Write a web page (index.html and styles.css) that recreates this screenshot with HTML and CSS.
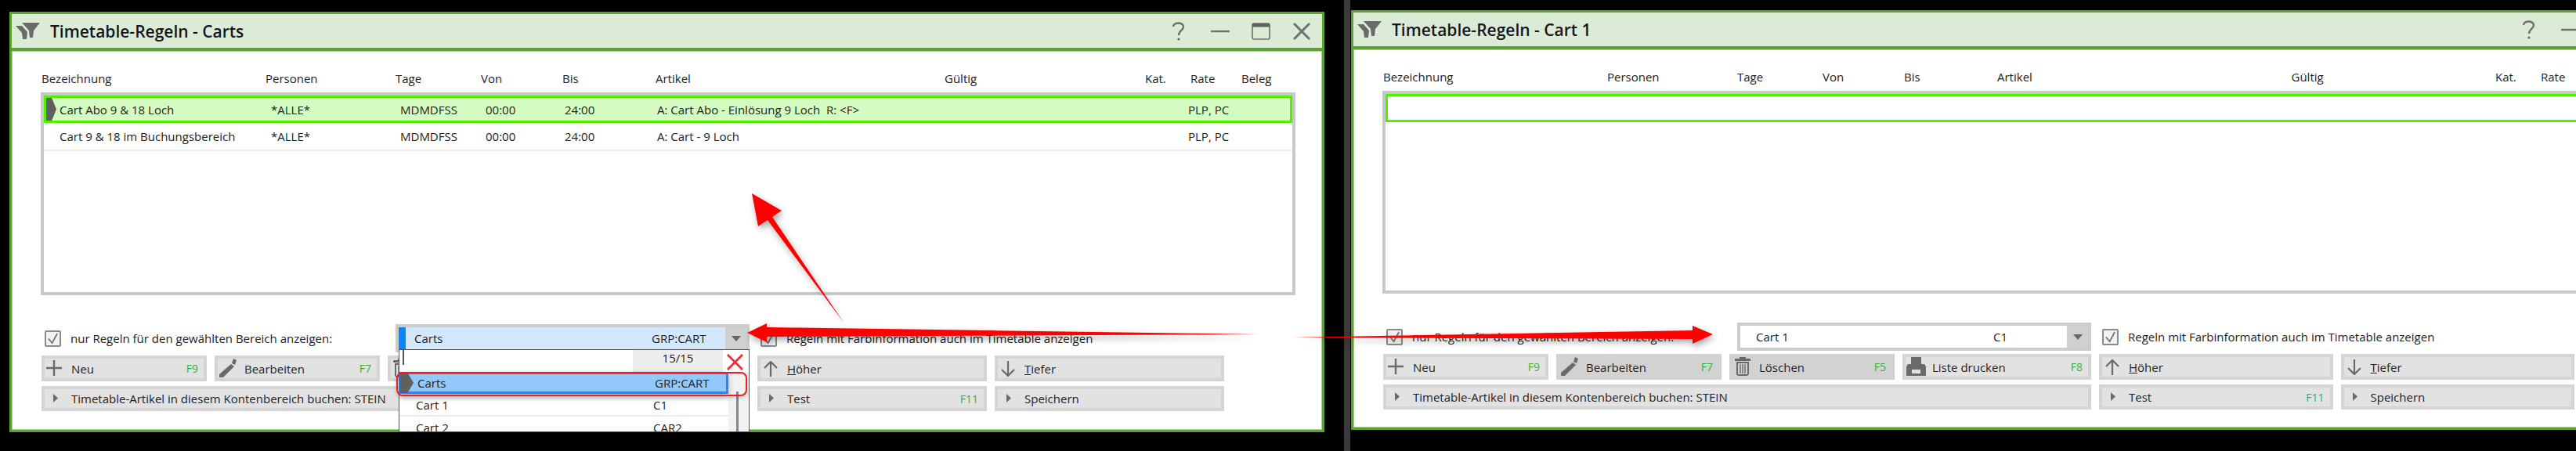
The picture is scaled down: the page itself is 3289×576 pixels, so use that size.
FILE: index.html
```html
<!DOCTYPE html>
<html>
<head>
	<title>Timetable-Regeln</title>
	<meta name="viewport" content="width=device-width, initial-scale=1">

	<link rel="stylesheet" href="styles.css">
</head>
<body>
	<svg width="0" height="0" class="defs">
		<symbol id="i-funnel" viewBox="0 0 32 22">
			<polygon points="0,4 8,4 15,12 14,21 9,21 8,13"/>
			<polygon points="8,0 31,0 23,10 22,19 18,19 17,10"/>
		</symbol>
		<symbol id="i-plus" viewBox="0 0 20 20">
			<path d="M10 0V20M0 10H20" fill="none" stroke="#6a6a6a" stroke-width="2.4"/>
		</symbol>
		<symbol id="i-pencil" viewBox="0 0 24 24">
			<polygon points="16,7 20,10 6,24 1,24 1,20"/>
			<polygon points="19,0 23,2 21,8 17,6"/>
		</symbol>
		<symbol id="i-trash" viewBox="0 0 22 24">
			<path d="M7 2V0H15V2H21V5H1V2Z"/>
			<path d="M3 6H19V22L17 24H5L3 22ZM5 8V22H17V8Z" fill-rule="evenodd"/>
			<path d="M8 9V21M11 9V21M14 9V21" stroke="#6a6a6a" fill="none" stroke-width="1.4"/>
		</symbol>
		<symbol id="i-print" viewBox="0 0 25 24">
			<path d="M6 0H19V9H6Z"/>
			<path d="M2 9H23L25 12V24H0V12ZM7 16V21H18V16Z" fill-rule="evenodd"/>
		</symbol>
		<symbol id="i-up" viewBox="0 0 18 20">
			<path d="M9 20V1M1 9L9 1L17 9" fill="none" stroke="#6a6a6a" stroke-width="2.2"/>
		</symbol>
		<symbol id="i-down" viewBox="0 0 18 20">
			<path d="M9 0V19M1 11L9 19L17 11" fill="none" stroke="#6a6a6a" stroke-width="2.2"/>
		</symbol>
		<symbol id="i-play" viewBox="0 0 6 11">
			<polygon points="0,0 6,5.5 0,11"/>
		</symbol>
		<symbol id="i-check" viewBox="0 0 16 16">
			<path d="M2 8L7 14L14 1" fill="none" stroke="#777" stroke-width="2"/>
		</symbol>
		<symbol id="i-help" viewBox="0 0 18 24">
			<path d="M2 6C2 0 15 0 15 6C15 11 9 11 9 17" fill="none" stroke="#707070" stroke-width="2.4"/>
			<circle cx="9" cy="22" r="1.6"/>
		</symbol>
		<symbol id="i-min" viewBox="0 0 24 4">
			<path d="M0 2H24" stroke="#707070" stroke-width="2.4"/>
		</symbol>
		<symbol id="i-max" viewBox="0 0 24 22">
			<rect x="1" y="1" width="22" height="20" rx="2" fill="none" stroke="#707070" stroke-width="1.6"/>
			<rect x="1" y="1" width="22" height="4.5" fill="#606060"/>
		</symbol>
		<symbol id="i-close" viewBox="0 0 22 22">
			<path d="M1 1L21 21M21 1L1 21" stroke="#707070" stroke-width="3"/>
		</symbol>
	</svg>

	<div class="screen">

		<section class="win win-a">
			<header class="win-title">
				<svg class="win-icon"><use href="#i-funnel"/></svg>
				<h1>Timetable-Regeln - Carts</h1>
				<div class="win-tools">
					<svg class="tool-help"><use href="#i-help"/></svg>
					<svg class="tool-min"><use href="#i-min"/></svg>
					<svg class="tool-max"><use href="#i-max"/></svg>
					<svg class="tool-close"><use href="#i-close"/></svg>
				</div>
			</header>
			<div class="win-body">
				<div class="list-head">
					<span>Bezeichnung</span><span>Personen</span><span>Tage</span><span>Von</span><span>Bis</span><span>Artikel</span><span>Gültig</span><span>Kat.</span><span>Rate</span><span>Beleg</span>
				</div>
				<div class="list">
					<div class="list-row active">
						<i class="row-mark"></i>
						<span>Cart Abo 9 &amp; 18 Loch</span><span>*ALLE*</span><span>MDMDFSS</span><span>00:00</span><span>24:00</span><span>A: Cart Abo - Einlösung 9 Loch&nbsp; R: &lt;F&gt;</span><span>PLP, PC</span>
					</div>
					<div class="list-row">
						<span>Cart 9 &amp; 18 im Buchungsbereich</span><span>*ALLE*</span><span>MDMDFSS</span><span>00:00</span><span>24:00</span><span>A: Cart - 9 Loch</span><span>PLP, PC</span>
					</div>
				</div>

				<div class="filter-row">
					<label class="check"><span class="box"><svg><use href="#i-check"/></svg></span>nur Regeln für den gewählten Bereich anzeigen:</label>
					<div class="combo combo-open">
						<i class="combo-bar"></i>
						<span class="combo-name">Carts</span>
						<span class="combo-code">GRP:CART</span>
						<span class="combo-arrow"></span>

						<div class="drop">
							<div class="drop-search">
								<i class="caret"></i>
								<span class="count">15/15</span>
								<svg class="drop-x" viewBox="0 0 22 22"><path d="M1 1L21 21M21 1L1 21" stroke="#e8333a" stroke-width="3"/></svg>
							</div>
							<div class="drop-main">
								<div class="drop-list">
									<div class="drop-item selected"><i class="row-mark"></i><span>Carts</span><span>GRP:CART</span></div>
									<div class="drop-item"><span>Cart 1</span><span>C1</span></div>
									<div class="drop-item"><span>Cart 2</span><span>CAR2</span></div>
								</div>
								<div class="drop-rail"><i></i></div>
							</div>
						</div>
						<div class="ring"></div>
					</div>
					<label class="check check-2"><span class="box"><svg><use href="#i-check"/></svg></span>Regeln mit Farbinformation auch im Timetable anzeigen</label>
				</div>

				<div class="actions">
					<button class="btn"><svg class="ic ic-plus"><use href="#i-plus"/></svg><span>Neu</span><em>F9</em></button>
					<button class="btn"><svg class="ic ic-pencil"><use href="#i-pencil"/></svg><span>Bearbeiten</span><em>F7</em></button>
					<button class="btn"><svg class="ic ic-trash"><use href="#i-trash"/></svg><span>Löschen</span><em>F5</em></button>
					<button class="btn"><svg class="ic ic-print"><use href="#i-print"/></svg><span>Liste drucken</span><em>F8</em></button>
					<button class="btn"><svg class="ic ic-arrow"><use href="#i-up"/></svg><span><u>H</u>öher</span></button>
					<button class="btn"><svg class="ic ic-arrow"><use href="#i-down"/></svg><span><u>T</u>iefer</span></button>
					<button class="btn wide"><svg class="ic ic-play"><use href="#i-play"/></svg><span>Timetable-Artikel in diesem Kontenbereich buchen: STEIN</span></button>
					<button class="btn"><svg class="ic ic-play"><use href="#i-play"/></svg><span>Test</span><em>F11</em></button>
					<button class="btn"><svg class="ic ic-play"><use href="#i-play"/></svg><span>Speichern</span></button>
				</div>
			</div>
		</section>

		<div class="divider"></div>

		<section class="win win-b">
			<header class="win-title">
				<svg class="win-icon"><use href="#i-funnel"/></svg>
				<h1>Timetable-Regeln - Cart 1</h1>
				<div class="win-tools">
					<svg class="tool-help"><use href="#i-help"/></svg>
					<svg class="tool-min"><use href="#i-min"/></svg>
					<svg class="tool-max"><use href="#i-max"/></svg>
					<svg class="tool-close"><use href="#i-close"/></svg>
				</div>
			</header>
			<div class="win-body">
				<div class="list-head">
					<span>Bezeichnung</span><span>Personen</span><span>Tage</span><span>Von</span><span>Bis</span><span>Artikel</span><span>Gültig</span><span>Kat.</span><span>Rate</span><span>Beleg</span>
				</div>
				<div class="list">
					<div class="list-row blank"></div>
				</div>

				<div class="filter-row">
					<label class="check"><span class="box"><svg><use href="#i-check"/></svg></span>nur Regeln für den gewählten Bereich anzeigen:</label>
					<div class="combo">
						<span class="combo-name">Cart 1</span>
						<span class="combo-code">C1</span>
						<span class="combo-arrow"></span>
					</div>
					<label class="check check-2"><span class="box"><svg><use href="#i-check"/></svg></span>Regeln mit Farbinformation auch im Timetable anzeigen</label>
				</div>

				<div class="actions">
					<button class="btn"><svg class="ic ic-plus"><use href="#i-plus"/></svg><span>Neu</span><em>F9</em></button>
					<button class="btn flat"><svg class="ic ic-pencil"><use href="#i-pencil"/></svg><span>Bearbeiten</span><em>F7</em></button>
					<button class="btn flat"><svg class="ic ic-trash"><use href="#i-trash"/></svg><span>Löschen</span><em>F5</em></button>
					<button class="btn"><svg class="ic ic-print"><use href="#i-print"/></svg><span>Liste drucken</span><em>F8</em></button>
					<button class="btn"><svg class="ic ic-arrow"><use href="#i-up"/></svg><span><u>H</u>öher</span></button>
					<button class="btn"><svg class="ic ic-arrow"><use href="#i-down"/></svg><span><u>T</u>iefer</span></button>
					<button class="btn wide"><svg class="ic ic-play"><use href="#i-play"/></svg><span>Timetable-Artikel in diesem Kontenbereich buchen: STEIN</span></button>
					<button class="btn"><svg class="ic ic-play"><use href="#i-play"/></svg><span>Test</span><em>F11</em></button>
					<button class="btn"><svg class="ic ic-play"><use href="#i-play"/></svg><span>Speichern</span></button>
				</div>
			</div>
		</section>

	</div> <!-- .screen -->

	<!-- red annotation arrows drawn over both windows -->
	<svg class="notes" viewBox="0 0 3289 576">
		<polygon points="1078,413 986,277 998,269 960,247 968,289 980,281"/>
		<polygon points="1607,427 979,430 979,437 954,425 979,413 979,418"/>
		<polygon points="1650,431 2161,422 2161,416 2187,427 2161,439 2161,433"/>
	</svg>
</body>
</html>
```

FILE: styles.css
```css
html, body {
	margin: 0;
	height: 576px;
	overflow: hidden;
	background-color: #000;
	font-family: "Open Sans", "Liberation Sans", sans-serif;
	font-size: 15px;
	color: #222;
}

.defs {
	display: block;
	position: absolute;
}
.defs symbol {
	fill: #6a6a6a;
}

.screen {
	display: flex;
	align-items: flex-start;
	width: 3289px;
	height: 576px;
	padding-left: 12px;
	box-sizing: border-box;
}

.divider {
	flex: none;
	width: 8px;
	height: 576px;
	margin: 0 1px 0 25px;
	background-color: #3a3a3a;
}

/* windows */
.win {
	flex: none;
	display: flex;
	flex-direction: column;
	box-sizing: border-box;
	height: 537px;
	background-color: #fff;
	border: 3px solid #5aa532;
}
.win-a {
	width: 1679px;
	margin-top: 15px;
}
.win-b {
	width: 1690px;
	height: 536px;
	margin-top: 13px;
}

.win-title {
	flex: none;
	display: flex;
	align-items: center;
	box-sizing: border-box;
	height: 47px;
	background-color: #dcebd5;
	border-bottom: 4px solid #5aa532;
}
.win-title h1 {
	margin: 0 0 0 12px;
	font-size: 21px;
	font-weight: 600;
	color: #16161e;
}
.win-icon {
	width: 32px;
	height: 22px;
	margin-left: 5px;
}
.win-tools {
	display: flex;
	align-items: center;
	margin-left: auto;
	padding-right: 15px;
}
.tool-help {
	width: 18px;
	height: 24px;
}
.tool-min {
	width: 24px;
	height: 4px;
	margin-left: 32px;
}
.tool-max {
	width: 24px;
	height: 22px;
	margin-left: 28px;
}
.tool-close {
	width: 22px;
	height: 22px;
	margin-left: 29px;
}

.win-body {
	flex: 1;
	padding: 0 34px 0 37px;
	box-shadow: inset 0 0 0 1px #a8d490;
}

/* rules list */
.list-head {
	display: grid;
	grid-template-columns: 286px 166px 109px 104px 119px 369fr 256fr 58px 65px 50px;
	height: 24px;
	margin: 23px 19px 6px 1px;
	line-height: 24px;
	white-space: nowrap;
}

.list {
	box-sizing: border-box;
	height: 259px;
	border: 4px solid #c8c8c8;
}

.list-row {
	display: grid;
	grid-template-columns: 270px 165px 109px 101px 118px 678px auto;
	align-items: center;
	position: relative;
	box-sizing: border-box;
	height: 36px;
	padding-left: 20px;
	border-bottom: 2px solid #ececec;
	white-space: nowrap;
}
.list-row.active {
	height: 35px;
	padding-left: 17px;
	background-color: #d4fcc0;
	border: 3px solid #50f000;
}
.list-row.blank {
	height: 36px;
	background-color: #fff;
	border: 3px solid #50f000;
}

.row-mark {
	position: absolute;
	left: 0;
	top: 0;
	width: 13px;
	height: 29px;
	background-color: #606060;
	clip-path: polygon(0 0, 55% 0, 100% 50%, 55% 100%, 0 100%);
}

/* filter row */
.filter-row {
	display: flex;
	align-items: center;
	height: 36px;
	margin-top: 37px;
}

.check {
	display: flex;
	align-items: center;
	white-space: nowrap;
}
.box {
	flex: none;
	display: flex;
	align-items: center;
	justify-content: center;
	box-sizing: border-box;
	width: 21px;
	height: 21px;
	margin: 0 12px 0 5px;
	background-color: #f2f2f2;
	border: 2px solid #8a8a8a;
	border-radius: 2px;
}
.box svg {
	width: 15px;
	height: 15px;
}
.filter-row > .check:first-child {
	width: 453px;
}
.check-2 {
	margin-left: 9px;
}

.combo {
	flex: none;
	display: flex;
	align-items: center;
	position: relative;
	box-sizing: border-box;
	width: 452px;
	height: 36px;
	background-color: #fff;
	border: 4px solid #ccc;
}
.combo-open {
	background-color: #d3e8fd;
	z-index: 2;
}
.combo-bar {
	position: absolute;
	left: 0;
	top: 0;
	width: 9px;
	height: 28px;
	background-color: #0a84ff;
}
.combo-name {
	width: 303px;
	padding-left: 20px;
}
.combo-code {
	flex: 1;
}
.combo-arrow {
	flex: none;
	display: flex;
	align-items: center;
	justify-content: center;
	width: 27px;
	height: 28px;
	background-color: #d0d0d0;
}
.combo-arrow::after {
	content: "";
	border-top: 7px solid #666;
	border-left: 6px solid transparent;
	border-right: 6px solid transparent;
}

/* opened dropdown */
.drop {
	position: absolute;
	left: 0;
	top: 28px;
	box-sizing: border-box;
	width: 448px;
	height: 106px;
	background-color: #fff;
	border: 1px solid #555;
	overflow: hidden;
}
.drop-search {
	display: flex;
	align-items: flex-start;
	position: relative;
	height: 28px;
}
.caret {
	width: 2px;
	height: 19px;
	margin-left: 4px;
	background-color: #555;
}
.count {
	width: 115px;
	height: 28px;
	margin-left: 292px;
	background-color: #eee;
	line-height: 20px;
	text-align: center;
}
.drop-x {
	width: 21px;
	height: 21px;
	margin: 5px 0 0 5px;
}
.drop-main {
	display: flex;
}
.drop-list {
	width: 420px;
}
.drop-item {
	display: grid;
	grid-template-columns: 303px auto;
	align-items: center;
	box-sizing: border-box;
	height: 29px;
	padding-left: 21px;
	border-bottom: 2px solid #ececec;
}
.drop-item.selected {
	position: relative;
	height: 28px;
	padding-left: 20px;
	background-color: #93c9fa;
	border: 3px solid #2f86e6;
	box-shadow: 0 4px 8px rgba(0, 0, 0, 0.25);
}
.drop-item.selected .row-mark {
	left: -2px;
	top: -2px;
	width: 17px;
	height: 26px;
}
.drop-rail {
	flex: 1;
	height: 80px;
	background-color: #f2f2f2;
}
.drop-rail i {
	display: block;
	width: 3px;
	height: 60px;
	margin: 25px 0 0 10px;
	background-color: #888;
}
.ring {
	position: absolute;
	left: -3px;
	top: 57px;
	box-sizing: border-box;
	width: 448px;
	height: 31px;
	border: 2px solid #ee1c25;
	border-radius: 8px;
	box-shadow: 0 2px 5px rgba(0, 0, 0, 0.2);
}

/* buttons */
.actions {
	display: grid;
	grid-template-columns: 211px 211px 211px 241px 1fr 1fr;
	grid-template-rows: 33px 32px;
	column-gap: 10px;
	row-gap: 6px;
	margin: 4px 91px 0 1px;
}
.btn {
	display: flex;
	align-items: center;
	position: relative;
	box-sizing: border-box;
	min-width: 0;
	padding: 0 7px 0 34px;
	background-color: #e2e2e2;
	border: 4px solid #d4d4d4;
	font: inherit;
	color: inherit;
	text-align: left;
}
.btn.flat {
	background-color: #d2d2d2;
	border-color: #d2d2d2;
}
.btn.wide {
	grid-column: span 4;
}
.btn em {
	margin-left: auto;
	font-style: normal;
	font-size: 14px;
	color: #38b038;
}
.ic {
	position: absolute;
	overflow: visible;
}
.ic-plus {
	left: 2px;
	top: 2px;
	width: 20px;
	height: 20px;
}
.ic-pencil {
	left: 1px;
	top: 0;
	width: 24px;
	height: 24px;
}
.ic-trash {
	left: 2px;
	top: 0;
	width: 22px;
	height: 24px;
}
.ic-print {
	left: 1px;
	top: 0;
	width: 25px;
	height: 24px;
}
.ic-arrow {
	left: 4px;
	top: 3px;
	width: 18px;
	height: 20px;
}
.ic-play {
	left: 11px;
	top: 6px;
	width: 6px;
	height: 11px;
}

/* annotation layer */
.notes {
	position: absolute;
	left: 0;
	top: 0;
	width: 3289px;
	height: 576px;
	z-index: 5;
	fill: #ff0000;
	filter: drop-shadow(2px 4px 4px rgba(0, 0, 0, 0.35));
	pointer-events: none;
}
```
